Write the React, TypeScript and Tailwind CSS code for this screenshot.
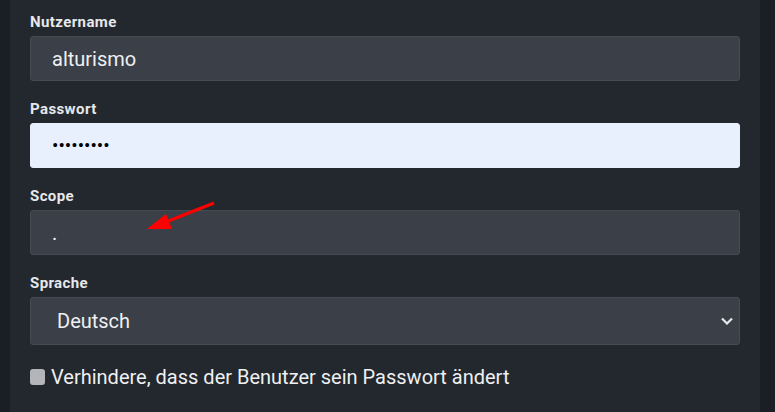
import { useState } from "react";

type FieldProps = {
  label: string;
  children: React.ReactNode;
};

function Field({ label, children }: FieldProps) {
  return (
    <div className="flex flex-col gap-[6px]">
      <label className="text-[15px] font-bold leading-[16px] tracking-[0.4px] text-[#e6e8eb]">{label}</label>
      {children}
    </div>
  );
}

const inputClass =
  "h-[45px] w-full rounded-[3px] border border-[#464a52] bg-[#3b3f47] px-[21px] text-[20px] text-[#eef0f2] outline-none";

export default function App() {
  const [user, setUser] = useState("alturismo");
  const [pass, setPass] = useState("123456789");
  const [scope, setScope] = useState(".");
  const [lang, setLang] = useState("de");
  const [locked, setLocked] = useState(false);

  return (
    <div
      className="flex h-[412px] w-[775px] bg-[#1b1f25]"
      style={{ fontFamily: "Roboto, 'Liberation Sans', sans-serif" }}
    >
      <div className="ml-[10px] w-[750px] bg-[#23272e] px-[20px] pt-[14px]">
        <div className="relative flex flex-col gap-[20px]">
          <Field label="Nutzername">
            <input className={inputClass} value={user} onChange={(e) => setUser(e.target.value)} />
          </Field>
          <Field label="Passwort">
            <input
              type="password"
              className="h-[45px] w-full rounded-[3px] border border-[#e8f0fe] bg-[#e8f0fe] px-[21px] text-[19px] text-black outline-none"
              value={pass}
              onChange={(e) => setPass(e.target.value)}
            />
          </Field>
          <Field label="Scope">
            <input className={inputClass} value={scope} onChange={(e) => setScope(e.target.value)} />
          </Field>
          <Field label="Sprache">
            <div className="relative">
              <select
                className="h-[48px] w-full appearance-none rounded-[3px] border border-[#464a52] bg-[#3b3f47] px-[26px] text-[20px] text-[#eef0f2] outline-none"
                value={lang}
                onChange={(e) => setLang(e.target.value)}
              >
                <option value="de">Deutsch</option>
                <option value="en">English</option>
              </select>
              <svg
                viewBox="0 0 12 8"
                className="pointer-events-none absolute right-[7px] top-[20px] h-[8px] w-[12px]"
                fill="none"
                stroke="#e6e8eb"
                strokeWidth="2.2"
              >
                <path d="M1 1.5l5 5 5-5" />
              </svg>
            </div>
          </Field>

          {/* pointer drawn over the scope field */}
          <svg
            className="pointer-events-none absolute left-[98px] top-[184px] h-[40px] w-[90px]"
            viewBox="0 0 90 40"
          >
            <line x1="86" y1="5" x2="38" y2="24" stroke="#ff0000" strokeWidth="3" />
            <polygon points="19,31 38,16 44,31" fill="#ff0000" />
          </svg>
        </div>

        <label className="mt-[20px] flex items-center gap-[6px] text-[20px] leading-[24px] text-[#eef0f2]">
          <input
            type="checkbox"
            checked={locked}
            onChange={(e) => setLocked(e.target.checked)}
            className="h-[16px] w-[15px] appearance-none rounded-[3px] bg-[#b3b5b9]"
          />
          Verhindere, dass der Benutzer sein Passwort ändert
        </label>
      </div>
    </div>
  );
}
